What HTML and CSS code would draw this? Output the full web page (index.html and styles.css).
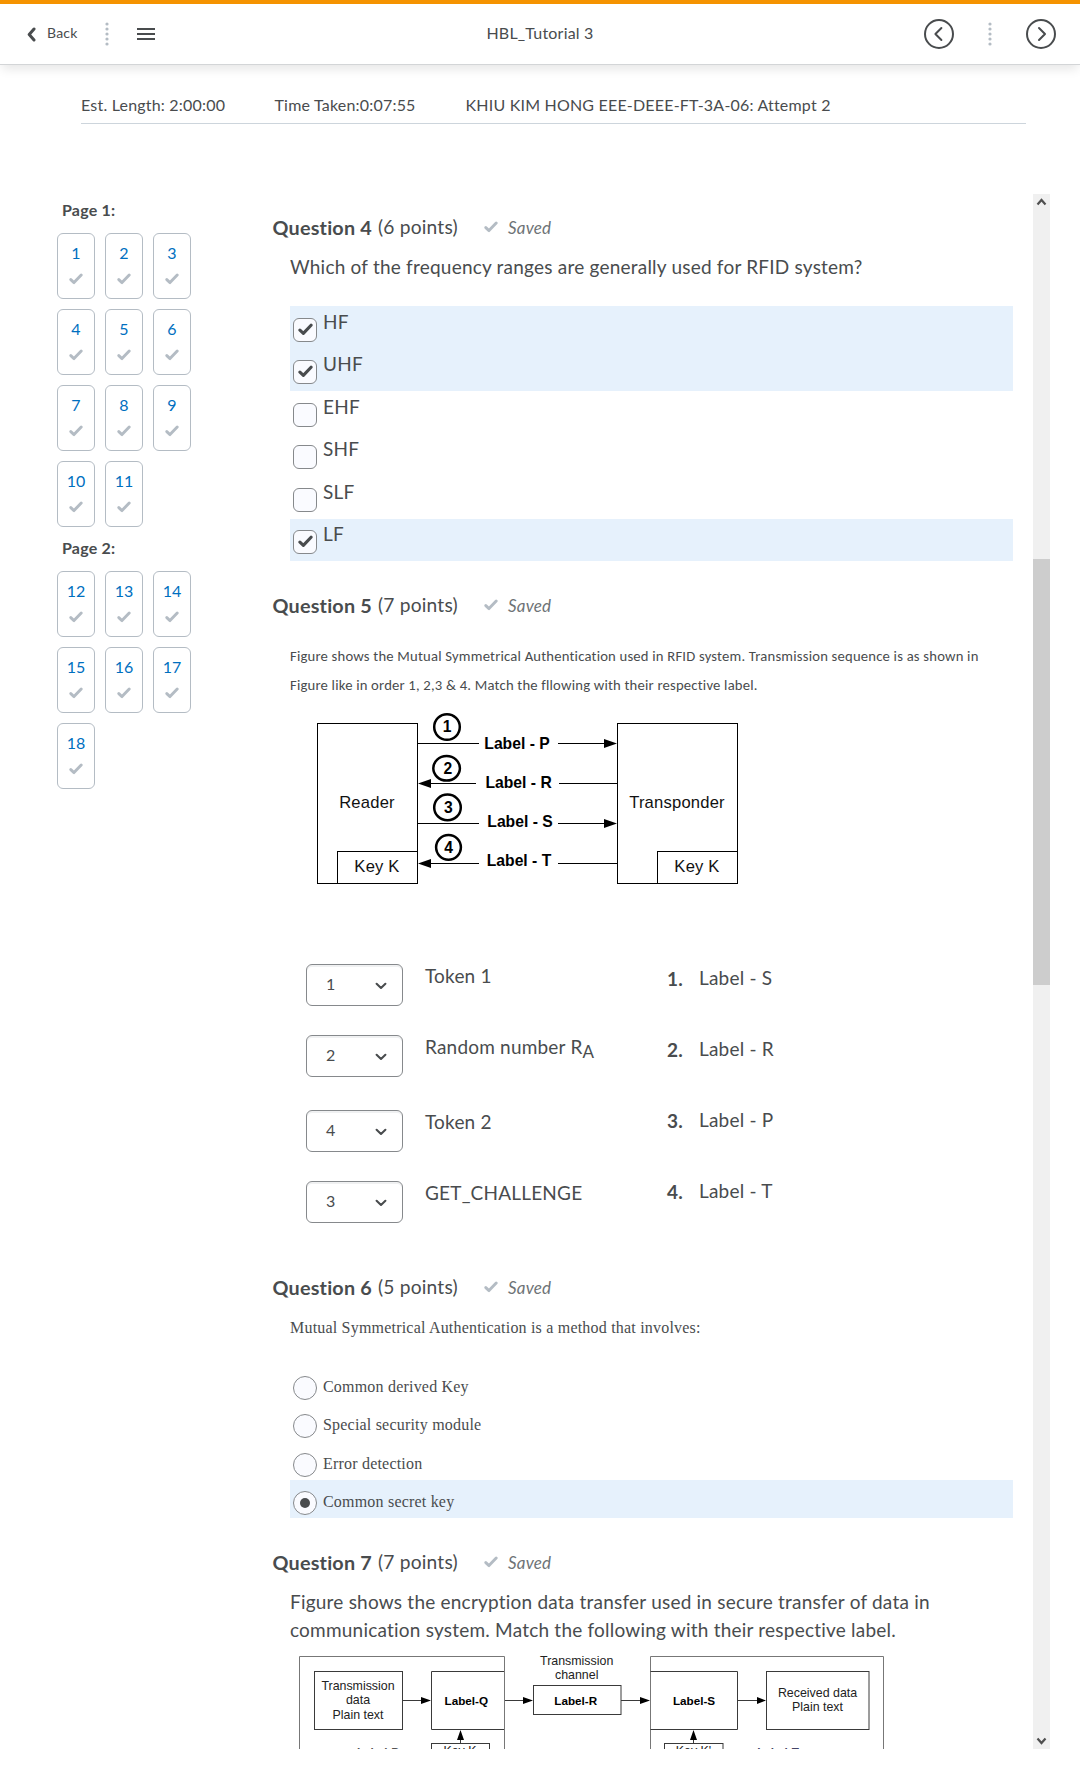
FILE: index.html
```html
<!DOCTYPE html>
<html lang="en">
<head>
<meta charset="utf-8">
<title>HBL_Tutorial 3</title>
<link rel="stylesheet" href="styles.css">
</head>
<body>
<svg class="defs" width="0" height="0" aria-hidden="true">
  <symbol id="check" viewBox="0 0 14 12"><path d="M1.8 6.6 5 9.6 12.2 2" fill="none" stroke="currentColor" stroke-width="2.9" stroke-linecap="round" stroke-linejoin="round"/></symbol>
  <symbol id="down" viewBox="0 0 12 8"><path d="M1.6 1.8 6 5.9 10.4 1.8" fill="none" stroke="currentColor" stroke-width="2.1" stroke-linecap="round" stroke-linejoin="round"/></symbol>
  <symbol id="dots" viewBox="0 0 4 24"><g fill="#b4bcc4"><circle cx="2" cy="2" r="1.6"/><circle cx="2" cy="7" r="1.6"/><circle cx="2" cy="12" r="1.6"/><circle cx="2" cy="17" r="1.6"/><circle cx="2" cy="22" r="1.6"/></g></symbol>
</svg>

<header class="topbar">
  <div class="top-left">
    <svg class="back-icon" width="9" height="15" viewBox="0 0 9 15"><path d="M7 2 2.2 7.5 7 13" fill="none" stroke="#494c4e" stroke-width="3" stroke-linecap="round" stroke-linejoin="round"/></svg>
    <span class="back">Back</span>
    <svg class="dots" width="4" height="24"><use href="#dots"/></svg>
    <svg class="menu" width="18" height="12" viewBox="0 0 18 12"><path d="M0 1h18M0 6h18M0 11h18" stroke="#494c4e" stroke-width="2"/></svg>
  </div>
  <div class="title">HBL_Tutorial 3</div>
  <div class="top-right">
    <svg width="30" height="30" viewBox="0 0 30 30" fill="none" stroke="#494c4e" stroke-width="2" stroke-linecap="round" stroke-linejoin="round"><circle cx="15" cy="15" r="14"/><path d="M17.4 9 11.4 15l6 6"/></svg>
    <svg width="4" height="24"><use href="#dots"/></svg>
    <svg width="30" height="30" viewBox="0 0 30 30" fill="none" stroke="#494c4e" stroke-width="2" stroke-linecap="round" stroke-linejoin="round"><circle cx="15" cy="15" r="14"/><path d="M13 9l6 6-6 6"/></svg>
  </div>
</header>

<div class="info">
  <span class="length">Est. Length: 2:00:00</span>
  <span class="taken">Time Taken:0:07:55</span>
  <span>KHIU KIM HONG EEE-DEEE-FT-3A-06: Attempt 2</span>
</div>

<div class="main">
  <nav class="pages">
    <h2>Page 1:</h2>
    <div class="grid">
      <a>1<svg><use href="#check"/></svg></a><a>2<svg><use href="#check"/></svg></a><a>3<svg><use href="#check"/></svg></a>
      <a>4<svg><use href="#check"/></svg></a><a>5<svg><use href="#check"/></svg></a><a>6<svg><use href="#check"/></svg></a>
      <a>7<svg><use href="#check"/></svg></a><a>8<svg><use href="#check"/></svg></a><a>9<svg><use href="#check"/></svg></a>
      <a>10<svg><use href="#check"/></svg></a><a>11<svg><use href="#check"/></svg></a>
    </div>
    <h2>Page 2:</h2>
    <div class="grid">
      <a>12<svg><use href="#check"/></svg></a><a>13<svg><use href="#check"/></svg></a><a>14<svg><use href="#check"/></svg></a>
      <a>15<svg><use href="#check"/></svg></a><a>16<svg><use href="#check"/></svg></a><a>17<svg><use href="#check"/></svg></a>
      <a>18<svg><use href="#check"/></svg></a>
    </div>
  </nav>

  <main class="questions">
    <section class="q4">
      <div class="heading"><b>Question 4</b><span>(6 points)</span><svg><use href="#check"/></svg><i>Saved</i></div>
      <p class="text">Which of the frequency ranges are generally used for RFID system?</p>
      <ul class="checks">
        <li class="on"><span class="box"><svg><use href="#check"/></svg></span>HF</li>
        <li class="on"><span class="box"><svg><use href="#check"/></svg></span>UHF</li>
        <li><span class="box"></span>EHF</li>
        <li><span class="box"></span>SHF</li>
        <li><span class="box"></span>SLF</li>
        <li class="on"><span class="box"><svg><use href="#check"/></svg></span>LF</li>
      </ul>
    </section>

    <section class="q5">
      <div class="heading"><b>Question 5</b><span>(7 points)</span><svg><use href="#check"/></svg><i>Saved</i></div>
      <p class="text calibri">Figure shows the Mutual Symmetrical Authentication used in RFID system. Transmission sequence is as shown in<br>Figure like in order 1, 2,3 &amp; 4. Match the fllowing with their respective label.</p>
      <svg class="figure" width="460" height="175" viewBox="290 715 460 175" font-family="Liberation Sans, Arial, sans-serif">
        <g fill="none" stroke="#000" stroke-width="1">
          <rect x="317.5" y="723.5" width="100" height="160"/><rect x="337.5" y="851.5" width="80" height="32"/>
          <rect x="617.5" y="723.5" width="120" height="160"/><rect x="657.5" y="851.5" width="80" height="32"/>
          <path d="M418 743.5h61M558 743.5h50M428 783.5h48M559 783.5h58M418 823.5h61M558 823.5h50M428 863.5h51M558 863.5h59"/>
        </g>
        <path d="M617 743.5l-13-4.5v9zM418 783.5l13-4.5v9zM617 823.5l-13-4.5v9zM418 863.5l13-4.5v9z"/>
        <g fill="#fff" stroke="#000" stroke-width="2.5"><circle cx="447" cy="727" r="12.8"/><ellipse cx="446.6" cy="768.3" rx="13.3" ry="12.3"/><ellipse cx="447.5" cy="807.4" rx="13.3" ry="12.9"/><circle cx="448.5" cy="847.3" r="12.4"/></g>
        <g font-weight="700" font-size="15.7" letter-spacing="0" text-anchor="middle">
          <text x="447" y="732">1</text><text x="447.8" y="774">2</text><text x="448.3" y="813">3</text><text x="448.5" y="853">4</text>
          <text x="517" y="749">Label - P</text><text x="518.6" y="788">Label - R</text><text x="520" y="827">Label - S</text><text x="519" y="866">Label - T</text>
        </g>
        <g font-size="16.6" text-anchor="middle" fill="#111">
          <text x="367" y="807.8">Reader</text><text x="677" y="807.8">Transponder</text><text x="377" y="872">Key K</text><text x="697" y="872">Key K</text>
        </g>
      </svg>
      <div class="matching">
        <div class="choices">
          <div class="choice"><span class="select">1<svg><use href="#down"/></svg></span><span>Token 1</span></div>
          <div class="choice tall"><span class="select">2<svg><use href="#down"/></svg></span><span>Random number R<sub>A</sub></span></div>
          <div class="choice"><span class="select">4<svg><use href="#down"/></svg></span><span>Token 2</span></div>
          <div class="choice"><span class="select">3<svg><use href="#down"/></svg></span><span>GET_CHALLENGE</span></div>
        </div>
        <div class="answers">
          <div><b>1.</b><span>Label - S</span></div>
          <div><b>2.</b><span>Label - R</span></div>
          <div><b>3.</b><span>Label - P</span></div>
          <div><b>4.</b><span>Label - T</span></div>
        </div>
      </div>
    </section>

    <section class="q6">
      <div class="heading"><b>Question 6</b><span>(5 points)</span><svg><use href="#check"/></svg><i>Saved</i></div>
      <p class="text serif">Mutual Symmetrical Authentication is a method that involves:</p>
      <ul class="radios">
        <li><span class="radio"></span><span>Common derived Key</span></li>
        <li><span class="radio"></span><span>Special security module</span></li>
        <li><span class="radio"></span><span>Error detection</span></li>
        <li class="on"><span class="radio"></span><span>Common secret key</span></li>
      </ul>
    </section>

    <section class="q7">
      <div class="heading"><b>Question 7</b><span>(7 points)</span><svg><use href="#check"/></svg><i>Saved</i></div>
      <p class="text">Figure shows the encryption data transfer used in secure transfer of data in<br>communication system. Match the following with their respective label.</p>
      <svg class="figure" width="610" height="99" viewBox="290 1650 610 99" font-family="Liberation Sans, Arial, sans-serif">
        <g fill="none" stroke="#777"><path d="M299.5 1760V1656.5H504.5V1760M650.5 1760V1656.5H883.5V1760"/></g>
        <g fill="none" stroke="#3a3a3a">
          <rect x="314.5" y="1671.5" width="88" height="58"/><path d="M504 1671.5H431.5V1729.5H504"/>
          <rect x="533.5" y="1685.5" width="87.5" height="29"/><path d="M650.5 1671.5H737.5V1729.5H650.5"/>
          <rect x="766.5" y="1671.5" width="102.5" height="58"/><rect x="431.5" y="1743.5" width="58" height="29"/><rect x="664.5" y="1743.5" width="58.5" height="29"/>
          <path d="M403 1700.5h20M505 1700.5h20M621 1700.5h20M738 1700.5h20M460.5 1743v-6M693.5 1743v-6"/>
        </g>
        <path d="M431 1700.5l-10-3.5v7zM533 1700.5l-10-3.5v7zM650 1700.5l-10-3.5v7zM766 1700.5l-9-3.5v7zM460.5 1730l-3.5 10h7zM693.5 1730l-3.5 10h7z"/>
        <g font-size="12.4" letter-spacing="0" text-anchor="middle" fill="#222">
          <text x="358" y="1689.5">Transmission</text><text x="358" y="1704">data</text><text x="358" y="1718.5">Plain text</text>
          <text x="576.7" y="1664.8">Transmission</text><text x="576.7" y="1679.3">channel</text>
          <text x="817.5" y="1696.5">Received data</text><text x="817.5" y="1711.2">Plain text</text>
          <text x="460" y="1754.8">Key K</text><text x="693.5" y="1754.8">Key K'</text>
        </g>
        <g font-size="11.7" letter-spacing="0" font-weight="700" text-anchor="middle">
          <text x="466.3" y="1705">Label-Q</text><text x="575.7" y="1705">Label-R</text><text x="694" y="1704.5">Label-S</text>
          <text x="378" y="1756.2" fill="#555">Label-P</text><text x="778" y="1756.2" fill="#446">Label-T</text>
        </g>
      </svg>
    </section>
  </main>

  <div class="scrollbar">
    <svg width="11" height="8" viewBox="0 0 11 8"><path d="M1.5 6.5 5.5 2l4 4.5" fill="none" stroke="#505050" stroke-width="2.2"/></svg>
    <div class="thumb"></div>
    <svg class="arrow-down" width="11" height="8" viewBox="0 0 11 8"><path d="M1.5 1.5 5.5 6l4-4.5" fill="none" stroke="#505050" stroke-width="2.2"/></svg>
  </div>
</div>
</body>
</html>
```
FILE: styles.css
```css
* { box-sizing: border-box; }

body {
  margin: 0;
  height: 1767px;
  overflow: hidden;
  background: #fff;
  color: #494c4e;
  font: 400 16px/24px Lato, sans-serif;
  letter-spacing: 0.2px;
}

svg { display: block; flex: none; }
.defs { display: none; }
h2, p, ul { margin: 0; padding: 0; }
li { list-style: none; }

/* Top navigation */
.topbar {
  display: grid;
  grid-template-columns: 1fr auto 1fr;
  align-items: center;
  height: 65px;
  border-top: 4px solid #f59300;
  border-bottom: 1px solid #d3d5d7;
  box-shadow: 0 6px 10px -2px rgba(0, 0, 0, 0.1);
}
.top-left { display: flex; align-items: center; padding-left: 27px; }
.back { margin: -2px 27px 0 11px; font-size: 14px; }
.dots { margin-right: 28px; }
.title { line-height: 20px; margin-top: -2px; }
.top-right {
  display: flex;
  align-items: center;
  justify-content: space-between;
  justify-self: end;
  width: 132px;
  margin-right: 24px;
}

.info {
  display: flex;
  height: 59px;
  margin: 0 54px 0 81px;
  padding-top: 28px;
  border-bottom: 1px solid #cdd5dc;
}
.length { width: 193.5px; }
.taken { width: 191px; }

.main { display: flex; height: 1555px; margin-top: 70px; padding-left: 57px; }

/* Question navigator */
.pages { width: 215px; padding-top: 4px; }
.pages h2 { padding-left: 5px; font-size: 16px; line-height: 24px; height: 35px; }
.pages .grid + h2 { margin-top: 9px; }
.grid { display: grid; grid-template-columns: repeat(3, 38px); gap: 10px; }
.grid a {
  display: flex;
  flex-direction: column;
  align-items: center;
  height: 66px;
  padding-top: 7px;
  border: 1px solid #b4bcc4;
  border-radius: 6px;
  color: #006fbf;
  letter-spacing: 0;
}
.grid svg { width: 14px; height: 12px; margin-top: 8px; color: #b4bcc4; }

/* Questions */
.questions { width: 761px; padding-top: 18px; overflow: hidden; }
.heading {
  display: flex;
  height: 30px;
  padding-left: 0.5px;
  font-size: 19.8px;
  line-height: 30px;
  white-space: nowrap;
}
.heading span { width: 80px; margin-left: 6px; font-size: 19.2px; }
.heading svg { width: 14px; height: 12px; margin: 9px 10px 0 26px; color: #b4bcc4; }
.heading i { font-size: 17px; line-height: 31px; color: #6e7376; }
.text { margin: 11px 0 0 18px; font-size: 19px; line-height: 28px; white-space: nowrap; letter-spacing: 0.215px; }

.checks, .radios { width: 723px; margin-left: 18px; }
.on { background: #e6f1fc; }
.checks { margin-top: 25px; }
.checks li { display: flex; height: 42.5px; padding: 2px 0 0 3px; font-size: 19px; line-height: 28px; }
.checks li:nth-child(even) { padding-top: 1.5px; }
.box, .radio {
  display: flex;
  align-items: center;
  justify-content: center;
  width: 24px;
  height: 24px;
  margin-right: 6px;
  border: 1px solid #86898c;
  border-radius: 6px;
  background: #fafbff;
}
.box { margin-top: 10px; }
.box svg { width: 15px; height: 13px; margin-top: -1px; }

.q5 { margin-top: 29px; }
.q5 .text { margin-top: 22px; }
.q5 .calibri { font-family: Carlito, Calibri, Lato, sans-serif; font-size: 14.67px; line-height: 29px; letter-spacing: 0.2px; }
.figure { margin-left: 18px; }
.q5 .figure { margin-top: 15px; overflow: visible; }

.matching { display: flex; height: 259px; margin-top: 74px; padding-left: 34px; font-size: 19px; line-height: 28px; }
.choices { width: 361px; }
.choice { display: flex; height: 71px; }
.choice.tall { height: 75px; }
.choice > span:last-child { margin-top: -2px; }
.choice sub { font-size: 17px; line-height: 0; vertical-align: -4px; }
.select {
  display: flex;
  justify-content: space-between;
  align-items: center;
  width: 97px;
  height: 42px;
  margin-right: 22px;
  padding: 0 15.5px 2px 19px;
  border: 1px solid #86898c;
  border-radius: 6px;
  box-shadow: inset 0 2px 0 #f0f1f2;
  font-size: 16px;
}
.select svg { width: 12px; height: 8px; margin-top: 4px; }
.answers div { display: flex; height: 71px; }
.answers b { width: 32px; padding-top: 1px; }

.q6 { margin-top: 48.5px; }
.serif, .radios { font-family: "Liberation Serif", serif; font-size: 16px; }
.q6 .text { margin-top: 14px; font-size: 16px; line-height: 24px; letter-spacing: 0.2px; }
.radios { margin-top: 25.5px; }
.radios li { display: flex; height: 38.33px; padding: 9.5px 0 0 3px; }
.radios li > span:last-child { margin-top: 0.5px; }
.radio { margin-top: 1.5px; border-radius: 50%; }
.on .radio::after { content: ""; width: 10px; height: 10px; border-radius: 50%; background: #494c4e; }

.q7 { margin-top: 29px; }
.q7 .figure { margin-top: 6px; }

.scrollbar {
  display: flex;
  flex-direction: column;
  align-items: center;
  width: 17px;
  padding: 4px 0;
  background: #f0f0f0;
}
.thumb { width: 17px; height: 426px; margin-top: 353px; background: #cdcdcd; }
.arrow-down { margin-top: auto; }
```
